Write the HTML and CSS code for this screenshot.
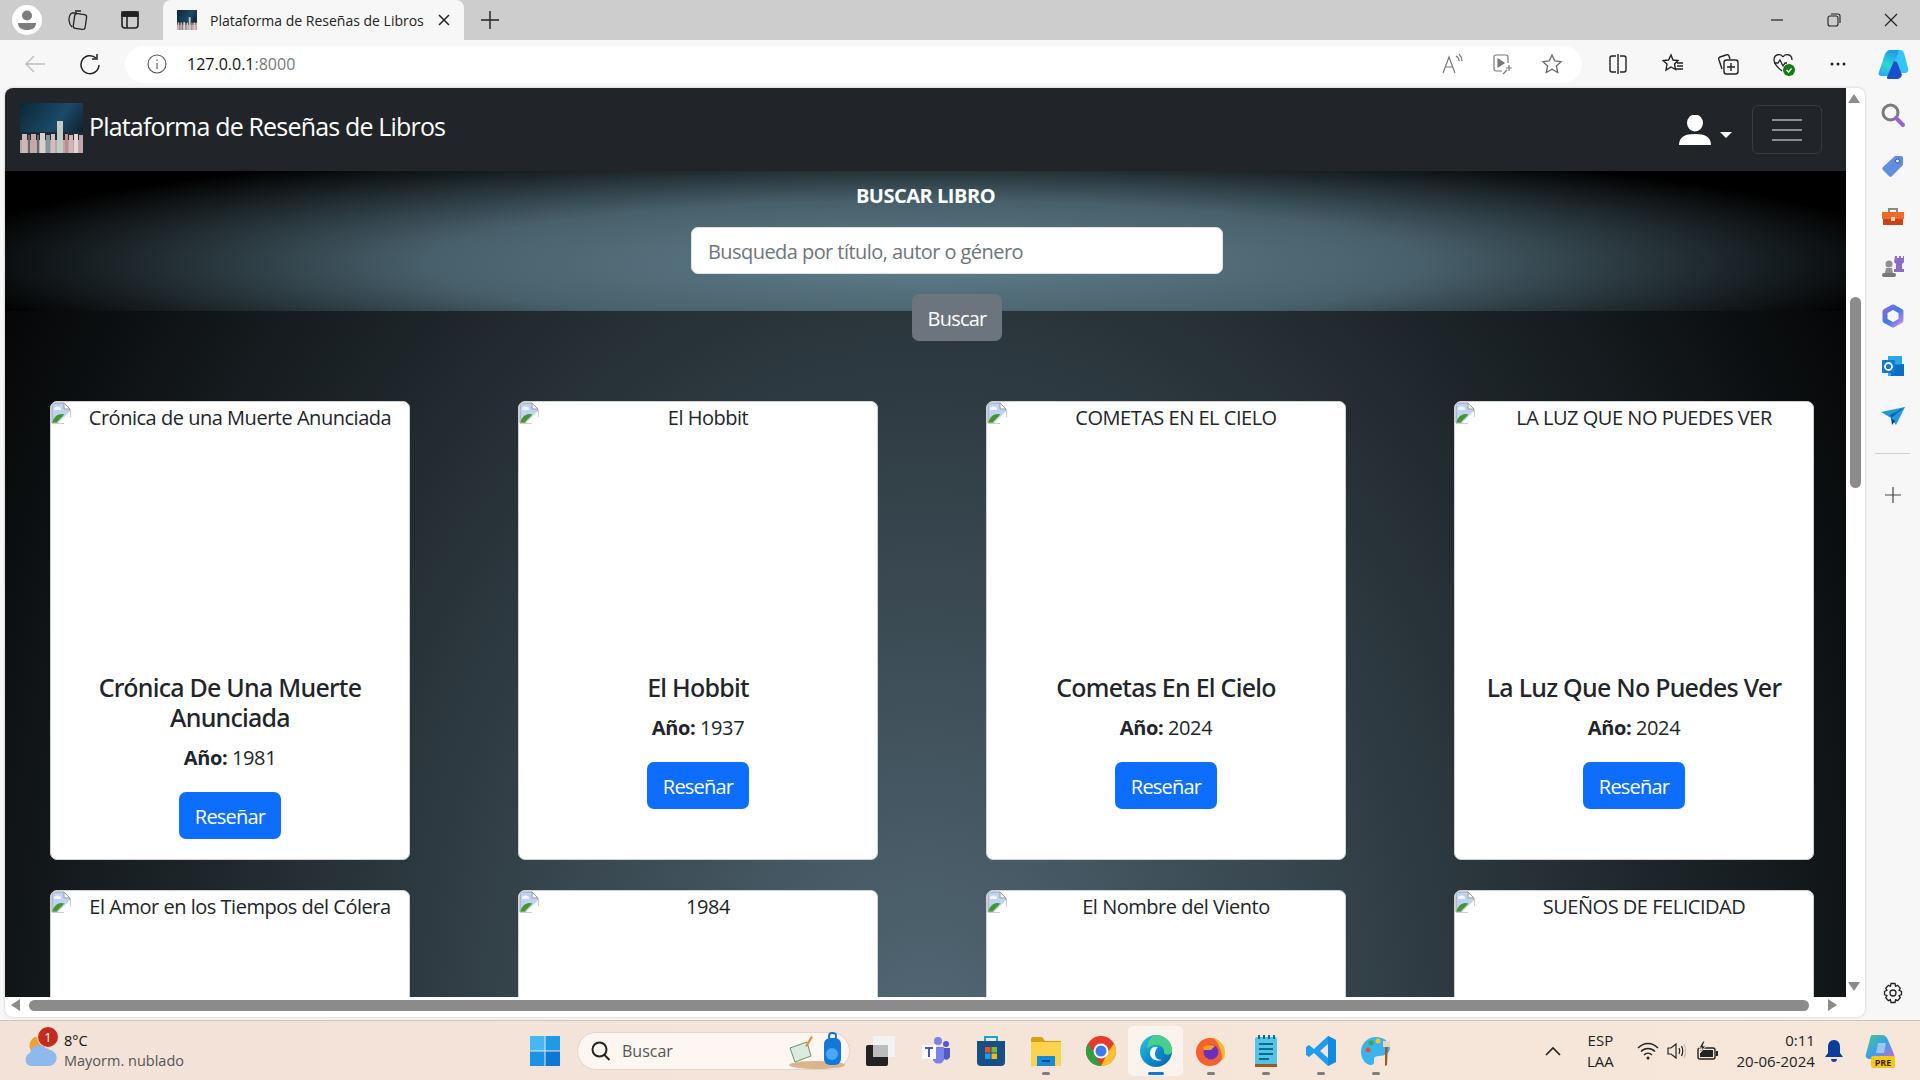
FILE: index.html
```html
<!DOCTYPE html>
<html lang="es">
<head>
    <title>Plataforma de Reseñas de Libros</title>
    <link rel="stylesheet" href="styles.css">
</head>
<body>
    <svg class="defs" width="0" height="0">
        <defs>
            <linearGradient id="skyGrad" x1="0" y1="0" x2="1" y2="0.6">
                <stop offset="0" stop-color="#0b2735"/>
                <stop offset="0.6" stop-color="#1b4a68"/>
                <stop offset="1" stop-color="#0f1f30"/>
            </linearGradient>
            <linearGradient id="edgeGrad" x1="0" y1="0" x2="1" y2="1">
                <stop offset="0" stop-color="#36c5d8"/>
                <stop offset="0.5" stop-color="#0c8fd0"/>
                <stop offset="1" stop-color="#0b5fa8"/>
            </linearGradient>
            <linearGradient id="copilotGrad" x1="0.6" y1="0" x2="0.2" y2="1">
                <stop offset="0" stop-color="#1b9de8"/>
                <stop offset="0.55" stop-color="#2fd8d0"/>
                <stop offset="1" stop-color="#28a8f0"/>
            </linearGradient>
            <linearGradient id="copilotPre" x1="0" y1="0" x2="1" y2="1">
                <stop offset="0" stop-color="#4cc98a"/>
                <stop offset="0.5" stop-color="#3aa0e8"/>
                <stop offset="1" stop-color="#c86ad8"/>
            </linearGradient>
            <linearGradient id="m365Grad" x1="0" y1="0" x2="1" y2="1">
                <stop offset="0" stop-color="#8a6ad8"/>
                <stop offset="0.5" stop-color="#3a7de0"/>
                <stop offset="1" stop-color="#c88ae0"/>
            </linearGradient>
            <symbol id="logo" viewBox="0 0 63 50" preserveAspectRatio="none">
                <rect width="63" height="50" fill="url(#skyGrad)"/>
                <rect y="29" width="63" height="8" fill="#1d2a33"/>
                <rect y="37" width="63" height="13" fill="#b8aaa8"/>
                <rect x="37" y="18" width="6" height="32" fill="#c3ccc2"/>
                <rect x="2" y="31" width="5" height="19" fill="#cfb6b8"/>
                <rect x="8" y="32" width="2" height="18" fill="#6c6466"/>
                <rect x="11" y="31" width="5" height="19" fill="#c6a8ac"/>
                <rect x="17" y="32" width="2" height="18" fill="#5c6a70"/>
                <rect x="20" y="30" width="5" height="20" fill="#dcd0cc"/>
                <rect x="26" y="32" width="4" height="18" fill="#7f98a0"/>
                <rect x="31" y="31" width="4" height="19" fill="#d0bcb8"/>
                <rect x="45" y="31" width="3" height="19" fill="#b88c92"/>
                <rect x="49" y="32" width="4" height="18" fill="#d9b0b4"/>
                <rect x="54" y="31" width="4" height="19" fill="#e2d6d6"/>
                <rect x="59" y="32" width="4" height="18" fill="#c4a4a8"/>
            </symbol>
            <symbol id="broken" viewBox="0 0 20 22">
                <path d="M1 1h12l6 6v8l-6 6H1z" fill="#bed2f2" stroke="#9c9c9c"/>
                <path d="M13 1v6h6z" fill="#f4f4f4" stroke="#9c9c9c"/>
                <path d="M3 6c2-2 5-2 7 0v2H3z" fill="#f2f6fc"/>
                <path d="M1.500 20.500c1-6 6-10 12-8l-8 8z" fill="#45962c"/>
                <path d="M7 21l12-12v12z" fill="#fff"/>
            </symbol>
        </defs>
    </svg>

    <div class="tabstrip">
        <span class="profile">
            <svg width="24" height="24" viewBox="0 0 24 24"><circle cx="12" cy="7.500" r="5" fill="#7d7d7d"/><path d="M3 15h18c0 5-4 7-9 7s-9-2-9-7z" fill="#7d7d7d"/></svg>
        </span>
        <span class="strip-icon">
            <svg width="24" height="24" viewBox="0 0 24 24" fill="none" stroke="#222" stroke-width="1.300"><rect x="9" y="6" width="12" height="15" rx="2.500" transform="rotate(8 15 13)"/><path d="M7 19c-2-2-3-4-3-7 0-4 1-6 3-7h5M10 3h6"/></svg>
        </span>
        <span class="strip-icon">
            <svg width="24" height="24" viewBox="0 0 24 24" fill="none" stroke="#222" stroke-width="1.600"><rect x="4" y="4" width="16" height="16" rx="3"/><path d="M4 8h16M9 8v12"/><path d="M4 4h16v4H4z" fill="#222"/></svg>
        </span>
        <div class="tab">
            <svg class="favicon" width="20" height="20"><use href="#logo"/></svg>
            <span class="tab-title">Plataforma de Reseñas de Libros</span>
            <svg width="14" height="14" viewBox="0 0 14 14" stroke="#222" stroke-width="1.500"><path d="M2 2l10 10M12 2L2 12"/></svg>
        </div>
        <span class="new-tab">
            <svg width="20" height="20" viewBox="0 0 20 20" stroke="#222" stroke-width="1.400"><path d="M10 1v18M1 10h18"/></svg>
        </span>
        <div class="window-controls">
            <svg width="14" height="14" viewBox="0 0 14 14" stroke="#222" stroke-width="1.200"><path d="M1 7h12"/></svg>
            <svg width="14" height="14" viewBox="0 0 14 14" fill="none" stroke="#222" stroke-width="1.100"><rect x="1" y="3" width="10" height="10" rx="2"/><path d="M4 1h7a2 2 0 0 1 2 2v7"/></svg>
            <svg width="14" height="14" viewBox="0 0 14 14" stroke="#222" stroke-width="1.200"><path d="M1 1l12 12M13 1L1 13"/></svg>
        </div>
    </div>

    <div class="toolbar">
        <span class="tool back">
            <svg width="22" height="22" viewBox="0 0 22 22" fill="none" stroke="#bdbdbd" stroke-width="1.400"><path d="M21 11H2M10 3l-8 8 8 8"/></svg>
        </span>
        <span class="tool reload">
            <svg width="22" height="22" viewBox="0 0 22 22" fill="none" stroke="#222" stroke-width="1.500"><path d="M17 5a9 9 0 1 0 3 7"/><path d="M18 1v5h-5"/></svg>
        </span>
        <div class="address">
            <svg width="20" height="20" viewBox="0 0 20 20" fill="none" stroke="#555" stroke-width="1.100"><circle cx="10" cy="10" r="9"/><path d="M10 9v6M10 5.500v1.500"/></svg>
            <span class="url">127.0.0.1<span class="port">:8000</span></span>
            <div class="address-actions">
                <svg width="22" height="22" viewBox="0 0 22 22" fill="none" stroke="#777" stroke-width="1.200"><path d="M2 20L8 4l6 16M4.500 14h7M15 3c2 1 3 3 3 5M18 1c2 2 3 4 3 7"/></svg>
                <svg width="22" height="22" viewBox="0 0 22 22" fill="none" stroke="#777" stroke-width="1.200"><path d="M11 18H5a2 2 0 0 1-2-2V4a2 2 0 0 1 2-2h10a2 2 0 0 1 2 2v6"/><path d="M7 6l6 4-6 4z" fill="#777"/><path d="M18 12v6M15 15h6M12 21l4-4"/></svg>
                <svg width="22" height="22" viewBox="0 0 22 22" fill="none" stroke="#666" stroke-width="1.300"><path d="M11 2l2.800 6 6.200.7-4.600 4.300 1.300 6.500L11 16.300 5.300 19.500l1.300-6.500L2 8.700 8.200 8z"/></svg>
            </div>
        </div>
        <div class="toolbar-actions">
            <svg width="22" height="22" viewBox="0 0 22 22" fill="none" stroke="#222" stroke-width="1.400"><path d="M9 3H5a2 2 0 0 0-2 2v12a2 2 0 0 0 2 2h4M13 3h4a2 2 0 0 1 2 2v12a2 2 0 0 1-2 2h-4M11 1v20"/></svg>
            <svg width="22" height="22" viewBox="0 0 22 22" fill="none" stroke="#222" stroke-width="1.400"><path d="M9 2l2 5 5 .5-3.500 3.500 1 5.500L9 14l-5 3 1-6L1 7.500 6.500 7zM15 10h6M15 13h6M14 16h7"/></svg>
            <svg width="22" height="22" viewBox="0 0 22 22" fill="none" stroke="#222" stroke-width="1.400"><path d="M5 16L2 7a2 2 0 0 1 1-3l6-2a2 2 0 0 1 3 1l1 3"/><rect x="7" y="7" width="14" height="14" rx="2.500"/><path d="M14 10v8M10 14h8"/></svg>
            <svg width="26" height="26" viewBox="0 0 26 26" fill="none" stroke="#222" stroke-width="1.300"><path d="M13 6c-2-4-9-3-9 3 0 3 3 7 8 11M13 6c2-4 9-3 9 3"/><path d="M4 12h4l2-3 3 6 2-3h2"/><circle cx="19" cy="19" r="6" fill="#107c10" stroke="none"/><path d="M16.500 19l2 2 3-3.500" stroke="#fff" stroke-width="1.400"/></svg>
            <svg width="22" height="22" viewBox="0 0 22 22" fill="#222"><circle cx="5" cy="11" r="1.500"/><circle cx="11" cy="11" r="1.500"/><circle cx="17" cy="11" r="1.500"/></svg>
            <svg width="32" height="32" viewBox="0 0 32 32"><path d="M20 2h3c2 0 3 1 4 3l4 15c1 3-1 5-3 5h-6l-4-12z" fill="#35c4f5"/><path d="M13 2h7c1.500 0 1.500 2 1 3l-7 20c-1 2-2 3-4 3H5c-3 0-4-2-3-4L8 6c1-2 3-4 5-4z" fill="url(#copilotGrad)"/><path d="M11 31h9c3 0 4-2 5-4l-5-13-3-1-7 16c0 1 0 2 1 2z" fill="#1b4fd0"/></svg>
        </div>
    </div>

    <div class="workspace">
        <div class="panel">
            <div class="viewport">
                <nav class="navbar">
                    <a class="brand">
                        <svg class="brand-logo" width="63" height="50"><use href="#logo"/></svg>
                        <span>Plataforma de Reseñas de Libros</span>
                    </a>
                    <div class="nav-right">
                        <svg width="32" height="30" viewBox="0 0 32 30" fill="#fff"><ellipse cx="16" cy="8" rx="8" ry="8.500"/><path d="M0 30c0-8 6-11 16-11s16 3 16 11z"/></svg>
                        <span class="caret"></span>
                        <button class="toggler"><span></span><span></span><span></span></button>
                    </div>
                </nav>
                <div class="scroller">
                    <section class="hero">
                        <h2 class="hero-title">BUSCAR LIBRO</h2>
                        <input class="search-input" type="text" placeholder="Busqueda por título, autor o género">
                        <button class="btn btn-secondary">Buscar</button>
                    </section>
                    <div class="book-grid">
                        <div class="card">
                            <div class="cover"><svg class="broken" width="20" height="22"><use href="#broken"/></svg><span>Crónica de una Muerte Anunciada</span></div>
                            <div class="card-body">
                                <h5>Crónica De Una Muerte Anunciada</h5>
                                <p><strong>Año:</strong> 1981</p>
                                <button class="btn btn-primary">Reseñar</button>
                            </div>
                        </div>
                        <div class="card">
                            <div class="cover"><svg class="broken" width="20" height="22"><use href="#broken"/></svg><span>El Hobbit</span></div>
                            <div class="card-body">
                                <h5>El Hobbit</h5>
                                <p><strong>Año:</strong> 1937</p>
                                <button class="btn btn-primary">Reseñar</button>
                            </div>
                        </div>
                        <div class="card">
                            <div class="cover"><svg class="broken" width="20" height="22"><use href="#broken"/></svg><span>COMETAS EN EL CIELO</span></div>
                            <div class="card-body">
                                <h5>Cometas En El Cielo</h5>
                                <p><strong>Año:</strong> 2024</p>
                                <button class="btn btn-primary">Reseñar</button>
                            </div>
                        </div>
                        <div class="card">
                            <div class="cover"><svg class="broken" width="20" height="22"><use href="#broken"/></svg><span>LA LUZ QUE NO PUEDES VER</span></div>
                            <div class="card-body">
                                <h5>La Luz Que No Puedes Ver</h5>
                                <p><strong>Año:</strong> 2024</p>
                                <button class="btn btn-primary">Reseñar</button>
                            </div>
                        </div>
                        <div class="card">
                            <div class="cover"><svg class="broken" width="20" height="22"><use href="#broken"/></svg><span>El Amor en los Tiempos del Cólera</span></div>
                        </div>
                        <div class="card">
                            <div class="cover"><svg class="broken" width="20" height="22"><use href="#broken"/></svg><span>1984</span></div>
                        </div>
                        <div class="card">
                            <div class="cover"><svg class="broken" width="20" height="22"><use href="#broken"/></svg><span>El Nombre del Viento</span></div>
                        </div>
                        <div class="card">
                            <div class="cover"><svg class="broken" width="20" height="22"><use href="#broken"/></svg><span>SUEÑOS DE FELICIDAD</span></div>
                        </div>
                    </div>
                </div>
            </div>
            <div class="vscroll">
                <span class="arrow-up"></span>
                <span class="vthumb"></span>
                <span class="arrow-down"></span>
            </div>
            <div class="hscroll">
                <span class="arrow-left"></span>
                <span class="hthumb"></span>
                <span class="arrow-right"></span>
            </div>
        </div>

        <aside class="sidebar">
            <svg width="26" height="26" viewBox="0 0 26 26" fill="none"><circle cx="10.500" cy="10.500" r="7.500" stroke="#7a7a7a" stroke-width="3"/><path d="M16 16l7 7" stroke="#9a62d0" stroke-width="4" stroke-linecap="round"/></svg>
            <svg width="24" height="24" viewBox="0 0 24 24"><path d="M14 2h6a2 2 0 0 1 2 2v7L11 22a2 2 0 0 1-3 0l-6-6a2 2 0 0 1 0-3z" fill="#5f8ee0"/><circle cx="16.500" cy="7" r="2" fill="#fff" stroke="#2c4f9c"/></svg>
            <svg width="24" height="24" viewBox="0 0 24 24"><path d="M8 8V5h8v3" fill="none" stroke="#8a8a8a" stroke-width="2"/><rect x="1" y="8" width="22" height="7" fill="#ef6a2a"/><rect x="2" y="15" width="20" height="6" fill="#c9431a"/><rect x="10" y="13" width="4" height="4" fill="#f3d2b8"/></svg>
            <svg width="24" height="24" viewBox="0 0 24 24"><path d="M14 2h2v2h2V2h2v2h2V2h1v6l-2 2v5h2v3H13v-3h2v-5l-2-2z" fill="#8e6bc8"/><circle cx="8" cy="10" r="3.500" fill="#8f8f8f"/><path d="M5 14h6l1 5H4z" fill="#8f8f8f"/><rect x="1" y="19" width="14" height="4" rx="2" fill="#777"/></svg>
            <svg width="24" height="24" viewBox="0 0 24 24" fill="none"><path d="M12 3l8 4.500v9L12 21l-8-4.500v-9z" stroke="url(#m365Grad)" stroke-width="5" stroke-linejoin="round"/></svg>
            <svg width="24" height="24" viewBox="0 0 24 24"><rect x="7" y="2" width="14" height="20" fill="#28a8ea"/><path d="M10 11l13-1v12H10z" fill="#0a6fc0"/><rect x="1" y="6" width="13" height="13" rx="1" fill="#0f78d4"/><circle cx="7.500" cy="12.500" r="3.500" fill="none" stroke="#fff" stroke-width="1.800"/></svg>
            <svg width="26" height="24" viewBox="0 0 26 24"><path d="M1 8l24-5-9 18-5-7z" fill="#1e9be0"/><path d="M11 14l14-11-15 8z" fill="#0c5fa8"/><path d="M11 14l1 7 3-4z" fill="#0a3f78"/></svg>
            <span class="side-sep"></span>
            <svg class="side-plus" width="16" height="16" viewBox="0 0 16 16" stroke="#444" stroke-width="1.200"><path d="M8 0v16M0 8h16"/></svg>
            <svg class="side-gear" width="22" height="22" viewBox="0 0 22 22" fill="none" stroke="#222" stroke-width="1.300"><path d="M9 1.500h4l.6 2.800 2-.9 2.700 2.900-1.300 2 2.500 1.100v3.200l-2.500 1.100 1.300 2-2.700 2.900-2-.9-.6 2.800H9l-.6-2.800-2 .9-2.700-2.900 1.300-2L2.500 12.600V9.400L5 8.300l-1.300-2 2.700-2.900 2 .9z"/><circle cx="11" cy="11" r="3"/></svg>
        </aside>
    </div>

    <footer class="taskbar">
        <div class="weather">
            <svg width="36" height="36" viewBox="0 0 36 36"><path d="M15 3a10 10 0 1 0 12 13A13 13 0 0 1 15 3z" fill="#f0a030"/><path d="M8 33a7 7 0 0 1 0-13 9 9 0 0 1 17-3 7.500 7.500 0 0 1 3 16z" fill="#8fb8ee"/></svg>
            <span class="weather-badge">1</span>
            <div class="weather-text">
                <span class="temp">8°C</span>
                <span class="sky">Mayorm. nublado</span>
            </div>
        </div>
        <div class="task-center">
            <svg class="start" width="30" height="30" viewBox="0 0 30 30"><rect width="14.500" height="14.500" fill="#45b8f2"/><rect x="15.500" width="14.500" height="14.500" fill="#1f9be6"/><rect y="15.500" width="14.500" height="14.500" fill="#1a93e2"/><rect x="15.500" y="15.500" width="14.500" height="14.500" fill="#0a78d4"/></svg>
            <div class="task-search">
                <svg width="22" height="22" viewBox="0 0 22 22" fill="none" stroke="#222" stroke-width="2"><circle cx="9.500" cy="9.500" r="7"/><path d="M14.500 15l5 5"/></svg>
                <span>Buscar</span>
                <svg class="search-art" width="58" height="38" viewBox="0 0 58 38"><ellipse cx="30" cy="33" rx="28" ry="4" fill="#d9b48c"/><path d="M3 16l17-6 4 14-16 6z" fill="#dfeadf" stroke="#5c9c68"/><path d="M18 14l6-10 2 1-6 10z" fill="#e8903c"/><rect x="37" y="6" width="17" height="27" rx="6" fill="#1476d8"/><rect x="42" y="1" width="7" height="7" rx="3" fill="none" stroke="#1476d8" stroke-width="2"/><circle cx="45" cy="22" r="6" fill="#4aa8f0"/></svg>
            </div>
            <span class="task-item">
                <svg width="32" height="32" viewBox="0 0 32 32"><rect x="1" y="10" width="22" height="21" rx="2" fill="#222"/><rect x="8" y="1" width="22" height="21" rx="1" fill="#f2f2f2"/><rect x="8" y="10" width="15" height="12" fill="#bcbcbc"/></svg>
            </span>
            <span class="task-item">
                <svg width="30" height="30" viewBox="0 0 30 30"><circle cx="17" cy="5" r="4" fill="#7b83eb"/><circle cx="25" cy="8" r="3" fill="#5059c9"/><path d="M12 11h11v13a6 6 0 0 1-11 0z" fill="#7b83eb"/><path d="M23 12h6v9a4 4 0 0 1-6 2z" fill="#5059c9"/><rect x="1" y="9" width="14" height="14" fill="#fff"/><path d="M4 12h8M8 12v9" stroke="#4b53bc" stroke-width="2"/></svg>
            </span>
            <span class="task-item">
                <svg width="30" height="32" viewBox="0 0 30 32"><path d="M9 6V2h12v4" fill="none" stroke="#18a0d8" stroke-width="2"/><path d="M1 6h28v21a4 4 0 0 1-4 4H5a4 4 0 0 1-4-4z" fill="#174e86"/><rect x="9" y="12" width="5.500" height="5.500" fill="#e8502a"/><rect x="15.500" y="12" width="5.500" height="5.500" fill="#7cbc2a"/><rect x="9" y="18.500" width="5.500" height="5.500" fill="#18a0e8"/><rect x="15.500" y="18.500" width="5.500" height="5.500" fill="#f8b818"/></svg>
            </span>
            <span class="task-item running">
                <svg width="32" height="30" viewBox="0 0 32 30"><path d="M1 3a2 2 0 0 1 2-2h9l3 4h16v6H1z" fill="#d9a010"/><rect x="1" y="6" width="30" height="24" fill="#fbd44e"/><path d="M7 20h18v10H7z" fill="#1888d8"/><rect x="12" y="24" width="8" height="2" fill="#0a4f90"/></svg>
            </span>
            <span class="task-item">
                <svg width="32" height="32" viewBox="0 0 32 32"><circle cx="16" cy="16" r="15" fill="#e33b2e"/><path d="M29 8.500A15 15 0 0 1 16 31l7-14z" fill="#fbc02d"/><path d="M3 8.500L10 20l6 11A15 15 0 0 1 3 8.500z" fill="#2f9e44"/><circle cx="16" cy="16" r="7.500" fill="#fff"/><circle cx="16" cy="16" r="5.500" fill="#3a7de8"/></svg>
            </span>
            <span class="task-item active">
                <svg width="34" height="34" viewBox="0 0 34 34"><circle cx="17" cy="17" r="16" fill="url(#edgeGrad)"/><path d="M17 1a16 16 0 0 1 16 15c0 5-6 6-8 3 1-5-3-8-8-8-6 0-9 4-9 4C9 6 13 1 17 1z" fill="#48cf8a"/><path d="M19 13a6 6 0 0 0-8 6c0 6 6 9 12 7-5 0-7-3-7-6 0-3 1-5 3-7z" fill="#fff"/></svg>
            </span>
            <span class="task-item running">
                <svg width="32" height="32" viewBox="0 0 32 32"><circle cx="15" cy="17" r="14" fill="#f6602d"/><path d="M18 2c5 3 12 7 12 15 0 4-1 6-3 9 0-10-3-17-9-24z" fill="#fbb62d"/><circle cx="16" cy="17" r="7.500" fill="#6a2fc0"/><path d="M8 12c3-2 8-3 12-1l-4 4H9z" fill="#f9a01e"/></svg>
            </span>
            <span class="task-item running">
                <svg width="26" height="34" viewBox="0 0 26 34"><rect x="2" y="3" width="22" height="28" rx="2" fill="#55c2e6"/><rect x="2" y="30" width="22" height="3" fill="#9c5a1e"/><path d="M6 10h14M6 15h14M6 20h14M6 25h10" stroke="#0c6c94" stroke-width="2"/><path d="M6 1v4M11 1v4M16 1v4M21 1v4" stroke="#0c6c94" stroke-width="2"/></svg>
            </span>
            <span class="task-item running">
                <svg width="32" height="32" viewBox="0 0 32 32"><path d="M23 1l8 4v22l-8 4L9 18l-5 4-3-2v-8l3-2 5 4z" fill="#1f9cf0"/><path d="M23 9l-8 7 8 7z" fill="#f5e4d9"/><path d="M23 1v30l8-4V5z" fill="#0a7fd0" opacity=".6"/></svg>
            </span>
            <span class="task-item running">
                <svg width="32" height="32" viewBox="0 0 32 32"><path d="M16 2C7 2 1 9 1 17c0 7 5 13 10 13 4 0 3-4 3-6s2-3 5-3c6 0 11-3 11-8 0-6-6-11-14-11z" fill="#3ab4ee"/><circle cx="8" cy="15" r="2.500" fill="#e8502a"/><circle cx="11" cy="8" r="2.500" fill="#3aa84a"/><circle cx="18" cy="6" r="2.500" fill="#f8c818"/><path d="M25 8l3 0-1 22-2 1z" fill="#9c5a1e"/><rect x="23" y="6" width="7" height="6" fill="#e6d6c0"/></svg>
            </span>
        </div>
        <div class="tray">
            <svg class="tray-chevron" width="16" height="10" viewBox="0 0 16 10" fill="none" stroke="#222" stroke-width="1.600"><path d="M1 9l7-7 7 7"/></svg>
            <div class="lang"><span>ESP</span><span>LAA</span></div>
            <svg width="22" height="20" viewBox="0 0 22 20" fill="none" stroke="#222" stroke-width="1.400"><path d="M1 7c6-6 14-6 20 0M4 10.500c4-4 10-4 14 0M7 14c2.500-2.500 5.500-2.500 8 0"/><circle cx="11" cy="17" r="1.500" fill="#222" stroke="none"/></svg>
            <svg width="22" height="20" viewBox="0 0 22 20" fill="none" stroke="#222" stroke-width="1.200"><path d="M2 7v6h3l5 4V3L5 7z"/><path d="M13 7c1 2 1 4 0 6M15.500 5c1.500 3 1.500 7 0 10"/><path d="M18 3c2 4 2 10 0 14" stroke="#bbb"/></svg>
            <svg width="24" height="22" viewBox="0 0 24 22"><rect x="3" y="8" width="17" height="11" rx="2" fill="none" stroke="#222" stroke-width="1.400"/><rect x="5" y="10" width="13" height="7" fill="#222"/><path d="M21 11h2v5h-2z" fill="#222"/><path d="M8 1L4 8h3l-2 5 6-7H8l2-5z" fill="#222" stroke="#f6e5d9"/></svg>
            <div class="clock"><span>0:11</span><span>20-06-2024</span></div>
            <svg class="bell" width="20" height="24" viewBox="0 0 20 24" fill="#0a3d9c"><path d="M10 1c4 0 6 3 6 7v6l3 4H1l3-4V8c0-4 2-7 6-7z"/><path d="M7 20h6c0 2-1.500 3-3 3s-3-1-3-3z"/></svg>
            <svg class="tray-copilot" width="32" height="36" viewBox="0 0 32 36"><path d="M8 2h10c3 0 5 2 6 5l6 14c1 3-1 5-4 5H6c-3 0-5-2-4-5L6 6c.500-2 1-4 2-4z" fill="url(#copilotPre)"/><path d="M14 10h8l-2 10h-8z" fill="#f2f2f2" opacity=".5"/><rect x="7" y="23" width="24" height="12" rx="2" fill="#f8c818"/><text x="19" y="32.500" class="pre-label">PRE</text></svg>
        </div>
    </footer>
</body>
</html>
```

FILE: styles.css
```css
* {
    box-sizing: border-box;
}

body {
    margin: 0;
    width: 1920px;
    height: 1080px;
    overflow: hidden;
    display: flex;
    flex-direction: column;
    background-color: #f7f7f7;
    font-family: "Open Sans", "Noto Sans", sans-serif;
    color: #212529;
}

.defs {
    position: absolute;
}

/* browser chrome */
.tabstrip {
    height: 40px;
    flex: none;
    display: flex;
    align-items: center;
    background-color: #cdcdcd;
    padding-left: 12px;
}

.profile {
    width: 30px;
    height: 30px;
    border-radius: 50%;
    background-color: #fff;
    display: flex;
    align-items: center;
    justify-content: center;
}

.strip-icon {
    width: 24px;
    display: flex;
    margin-left: 23px;
}

.strip-icon + .strip-icon {
    margin-left: 29px;
}

.tab {
    width: 301px;
    height: 40px;
    margin-left: 21px;
    background-color: #f7f7f7;
    border-radius: 8px 8px 0 0;
    display: flex;
    align-items: center;
    padding: 0 13px 0 14px;
}

.favicon {
    flex: none;
}

.tab-title {
    flex: 1;
    margin-left: 13px;
    font-size: 14px;
    white-space: nowrap;
    color: #222;
}

.new-tab {
    display: flex;
    margin-left: 16px;
}

.window-controls {
    margin-left: auto;
    display: flex;
    gap: 43px;
    padding-right: 22px;
}

.toolbar {
    height: 48px;
    flex: none;
    display: flex;
    align-items: center;
    padding-left: 24px;
}

.tool {
    display: flex;
}

.reload {
    margin-left: 33px;
}

.address {
    width: 1461px;
    height: 37px;
    margin-left: 24px;
    border-radius: 19px;
    background-color: #fff;
    display: flex;
    align-items: center;
    padding-left: 22px;
}

.url {
    margin-left: 20px;
    font-size: 16px;
    color: #111;
}

.port {
    color: #777;
}

.address-actions {
    margin-left: auto;
    display: flex;
    gap: 28px;
    padding-right: 19px;
}

.toolbar-actions {
    margin-left: 8px;
    display: grid;
    grid-auto-flow: column;
    grid-auto-columns: 55px;
    justify-items: center;
    align-items: center;
}

/* page area */
.workspace {
    flex: 1;
    min-height: 0;
    display: flex;
    align-items: flex-start;
}

.panel {
    width: 1860px;
    height: 929px;
    margin-left: 5px;
    flex: none;
    background-color: #fff;
    border-radius: 8px;
    overflow: hidden;
    display: grid;
    grid-template-columns: 1841px 19px;
    grid-template-rows: 909px 20px;
    box-shadow: 0 0 3px rgba(0, 0, 0, 0.2);
}

.viewport {
    display: flex;
    flex-direction: column;
    min-height: 0;
    letter-spacing: -0.03em;
}

.navbar {
    height: 83px;
    flex: none;
    background-color: #212529;
    display: flex;
    align-items: center;
    justify-content: space-between;
    padding: 0 24px 0 15px;
}

.brand {
    display: flex;
    align-items: center;
    gap: 6px;
    color: #fff;
    font-size: 25px;
    letter-spacing: -0.033em;
    margin-top: -4px;
}

.brand span {
    margin-top: -3px;
}

.brand-logo {
    display: block;
}

.nav-right {
    display: flex;
    align-items: center;
}

.caret {
    margin: 10px 0 0 9px;
    border-top: 6px solid #fff;
    border-left: 6px solid transparent;
    border-right: 6px solid transparent;
}

.toggler {
    width: 70px;
    height: 49px;
    margin-left: 20px;
    background: transparent;
    border: 1px solid rgba(255, 255, 255, 0.1);
    border-radius: 6px;
    display: flex;
    flex-direction: column;
    align-items: center;
    justify-content: center;
    gap: 8px;
    padding: 0;
}

.toggler span {
    width: 30px;
    height: 2px;
    background-color: #8b8d8f;
}

.scroller {
    flex: 1;
    min-height: 0;
    overflow: hidden;
    background: radial-gradient(ellipse 1150px 1500px at 921px 880px, #536976, #000);
}

.hero {
    height: 140px;
    background: radial-gradient(ellipse 1000px 125px at 50% 66%, #5f7d8b 0%, #48606b 50%, #000 100%);
    display: flex;
    flex-direction: column;
    align-items: center;
}

.hero-title {
    margin: 10px 0 0;
    font-size: 20px;
    line-height: 30px;
    font-weight: 700;
    color: #fff;
}

.search-input {
    width: 532px;
    height: 47px;
    margin: 16px 0 0 63px;
    padding: 1px 16px 0;
    border: 1px solid #dee2e6;
    border-radius: 7px;
    font-family: inherit;
    font-size: 20px;
    letter-spacing: -0.028em;
    color: #212529;
    flex: none;
}

.search-input::placeholder {
    color: #6c757d;
}

.btn {
    height: 47px;
    padding: 1px 16px 0;
    border: none;
    border-radius: 7px;
    font-family: inherit;
    font-size: 20px;
    letter-spacing: -0.04em;
    color: #fff;
    flex: none;
}

.btn-secondary {
    margin: 20px 0 0 63px;
    background-color: #6c757d;
}

.btn-primary {
    background-color: #0d6efd;
}

.book-grid {
    display: grid;
    grid-template-columns: repeat(4, 360px);
    column-gap: 108px;
    row-gap: 30px;
    padding: 90px 0 0 45px;
}

.card {
    background-color: #fff;
    border: 1px solid #ced0d2;
    border-radius: 7px;
    overflow: hidden;
}

.cover {
    height: 250px;
    position: relative;
    padding: 1px 0 0 20px;
    text-align: center;
    font-size: 20px;
    line-height: 30px;
}

.broken {
    position: absolute;
    left: 0;
    top: 0;
}

.card-body {
    padding: 20px;
    text-align: center;
}

.card-body h5 {
    margin: 0 0 10px;
    font-family: "Noto Sans", "Open Sans", sans-serif;
    font-size: 25px;
    line-height: 30px;
    font-weight: 500;
    letter-spacing: -0.03em;
}

.card-body p {
    margin: 0 0 20px;
    padding-top: 1px;
    height: 30px;
    font-size: 20px;
    line-height: 30px;
    letter-spacing: -0.02em;
}

/* scrollbars */
.vscroll {
    display: flex;
    flex-direction: column;
    align-items: center;
    padding: 6px 4px 6px 0;
    position: relative;
}

.arrow-up {
    border-bottom: 9px solid #8b8b8b;
    border-left: 6px solid transparent;
    border-right: 6px solid transparent;
}

.vthumb {
    position: absolute;
    top: 209px;
    left: 4px;
    width: 11px;
    height: 191px;
    border-radius: 6px;
    background-color: #8b8b8b;
}

.arrow-down {
    margin-top: auto;
    border-top: 9px solid #8b8b8b;
    border-left: 6px solid transparent;
    border-right: 6px solid transparent;
}

.hscroll {
    grid-column: 1 / 3;
    display: flex;
    align-items: center;
    padding: 0 28px 4px 6px;
}

.arrow-left {
    border-right: 9px solid #8b8b8b;
    border-top: 6px solid transparent;
    border-bottom: 6px solid transparent;
}

.hthumb {
    width: 1780px;
    height: 11px;
    margin-left: 9px;
    border-radius: 6px;
    background-color: #8b8b8b;
}

.arrow-right {
    margin-left: auto;
    border-left: 9px solid #8b8b8b;
    border-top: 6px solid transparent;
    border-bottom: 6px solid transparent;
}

/* edge sidebar */
.sidebar {
    flex: 1;
    height: 932px;
    display: flex;
    flex-direction: column;
    align-items: center;
    gap: 26px;
    padding-top: 14px;
}

.side-sep {
    width: 35px;
    height: 1px;
    margin-top: -1px;
    background-color: #cfcfcf;
}

.side-plus {
    margin-top: 7px;
}

.side-gear {
    margin-top: auto;
    margin-bottom: 16px;
}

/* windows taskbar */
.taskbar {
    height: 60px;
    flex: none;
    border-top: 1px solid #c9c4c0;
    background: linear-gradient(90deg, #f3e2d8, #f7e7da);
    display: flex;
    align-items: center;
    position: relative;
}

.weather {
    width: 530px;
    flex: none;
    display: flex;
    align-items: center;
    padding-left: 22px;
    position: relative;
}

.weather-badge {
    position: absolute;
    left: 38px;
    top: -4px;
    width: 20px;
    height: 20px;
    border-radius: 50%;
    background-color: #c42b1c;
    color: #fff;
    font-size: 13px;
    line-height: 20px;
    text-align: center;
}

.weather-text {
    margin-left: 6px;
    display: flex;
    flex-direction: column;
    font-size: 14.5px;
    line-height: 20px;
}

.temp {
    color: #111;
}

.sky {
    color: #555;
}

.task-center {
    display: flex;
    align-items: center;
}

.start {
    margin-right: 17px;
}

.task-search {
    width: 273px;
    height: 38px;
    border-radius: 19px;
    background-color: #fdf6f1;
    border: 1px solid #e3d6cd;
    display: flex;
    align-items: center;
    padding-left: 12px;
    font-size: 16px;
    color: #555;
    margin-right: 3px;
}

.task-search span {
    margin-left: 10px;
}

.search-art {
    margin-left: auto;
    margin-right: 4px;
}

.task-item {
    width: 55px;
    height: 50px;
    display: flex;
    align-items: center;
    justify-content: center;
    position: relative;
}

.task-item.running::after,
.task-item.active::after {
    content: "";
    position: absolute;
    bottom: 1px;
    left: 50%;
    width: 8px;
    height: 3px;
    margin-left: -4px;
    border-radius: 2px;
    background-color: #7d7d7d;
}

.task-item.active {
    background-color: #fcf3ec;
    border-radius: 5px;
}

.task-item.active::after {
    width: 16px;
    margin-left: -8px;
    background-color: #0a78d4;
}

.tray {
    flex: 1;
    display: flex;
    align-items: center;
    padding-left: 142px;
}

.tray-chevron {
    margin-right: 26px;
}

.lang {
    display: flex;
    flex-direction: column;
    align-items: center;
    font-size: 15px;
    line-height: 21px;
    color: #222;
    margin-right: 23px;
}

.tray svg + svg {
    margin-left: 7px;
}

.clock {
    display: flex;
    flex-direction: column;
    align-items: flex-end;
    width: 84px;
    margin-left: 12px;
    font-size: 15px;
    line-height: 21px;
    color: #222;
}

.tray .bell {
    margin-left: 9px;
}

.tray .tray-copilot {
    margin-left: 20px;
}

.pre-label {
    font-size: 9px;
    font-weight: 700;
    text-anchor: middle;
    fill: #3a2a00;
}
```
